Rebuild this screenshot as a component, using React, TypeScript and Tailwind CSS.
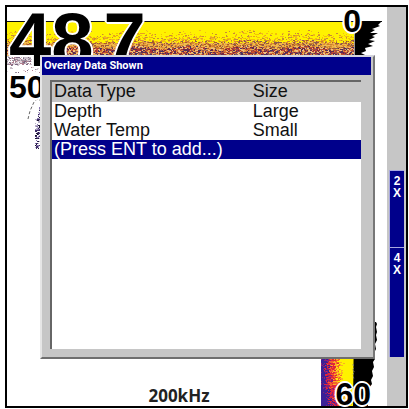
import React from 'react';

const rows = [
  { type: 'Depth', size: 'Large' },
  { type: 'Water Temp', size: 'Small' },
];

const zoomLevels = [
  { label: '2X', className: 'h-[77px]' },
  { label: '4X', className: 'h-[110px]' },
];

// small seeded generator, so the echo looks the same on every render
const createRandom = (seed: number) => () => {
  seed = (seed * 1664525 + 1013904223) % 4294967296;
  return seed / 4294967296;
};

type Pick = (x: number, y: number, random: () => number) => string | null;

// returns one path per colour, made of 1px high cells
const speckle = (x0: number, y0: number, x1: number, y1: number, seed: number, pick: Pick) => {
  const random = createRandom(seed);
  const paths: Record<string, string> = {};
  for (let y = y0; y < y1; y++) {
    let x = x0;
    while (x < x1) {
      const width = Math.min(random() > 0.6 ? 2 : 1, x1 - x);
      const color = pick(x, y, random);
      if (color) paths[color] = (paths[color] || '') + `M${x} ${y}h${width}v1h-${width}z`;
      x += width;
    }
  }
  return Object.entries(paths);
};

const from = (colors: string[], random: () => number) => colors[Math.floor(random() * colors.length)];

const surface = speckle(0, 23, 348, 49, 7, (x, y, random) => {
  const level = (y - 23) / 26 + Math.sin(x / 9) * 0.05;
  if (random() > level * 1.4) return null;
  if (level < 0.4) return from(['#f4c400', '#e8a020', '#f0b820', '#c88a38'], random);
  if (level < 0.65) return from(['#e08a30', '#c8802e', '#a85a2a', '#f0c050', '#8a5a50', '#e0a040'], random);
  return from(['#a83238', '#6a2848', '#4a3060', '#d87838', '#f0c080', '#8a5a58', '#c05030', '#e8a850'], random);
});

const clutter = speckle(0, 49, 34, 66, 21, (x, y, random) => {
  if (random() > (y < 58 ? 0.8 : 0.15)) return null;
  return from(['#9a8f9c', '#c8bec8', '#7b6580', '#e0d4dc', '#b08090', '#d0c4cc'], random);
});

const streak = speckle(18, 94, 36, 142, 33, (x, y, random) => {
  const edge = y < 112 ? 33 - (y - 94) * 0.2 : 28;
  if (x < edge || x > 40 - (y - 94) * 0.12 || random() > 0.6) return null;
  return from(['#3c2b66', '#8a78b0', '#1a1330', '#b8b0c8'], random);
});

const bottomEcho = speckle(0, 0, 33, 84, 5, (x, y, random) => {
  const v = x + (random() - 0.5) * 11 - (y > 58 ? (y - 58) * 0.25 : 0);
  if (v < 3) return '#3a2096';
  if (v < 6) return '#8a1f78';
  if (v < 11) return '#e0263a';
  if (v < 15) return '#f4622c';
  if (v < 19) return '#fbb024';
  return '#fff200';
});

const Cells = ({ paths }: { paths: [string, string][] }) => (
  <g shapeRendering="crispEdges">
    {paths.map(([color, d]) => (
      <path key={color} d={d} fill={color} />
    ))}
  </g>
);

const outline =
  '[text-shadow:2px_0_#fff,-2px_0_#fff,0_2px_#fff,0_-2px_#fff,1px_1px_#fff,-1px_-1px_#fff,1px_-1px_#fff,-1px_1px_#fff]';

const SonarEcho = () => (
  <>
    <svg className="absolute inset-x-0 top-0 h-[150px] w-full" viewBox="0 0 380 150" preserveAspectRatio="none">
      <rect x="0" y="14" width="348" height="35" fill="#fff200" />
      <rect x="0" y="36" width="348" height="13" fill="#f0b44a" />
      <Cells paths={surface} />
      <Cells paths={clutter} />
      <Cells paths={streak} />
      <path d="M21 112l2-8 4-9M28 93l4-1 3 4" fill="none" stroke="#666" strokeDasharray="3 2" />
      <path d="M0 14.500h375" stroke="#111" />
      <path
        d="M348 14h27l-4 4 2 1-8 3 3 1-5 3 8 0-6 3 3 1-6 3 6 1-7 3 5 2-8 2 1 3-5 2 4 2-4 2h-6z"
        fill="#000"
      />
      <path d="M347.500 26v22" stroke="#9a9a9a" />
    </svg>
    <svg className="absolute bottom-0 right-2.5 h-[84px] w-14" viewBox="0 0 56 84">
      <Cells paths={bottomEcho} />
      <path
        d="M33 0h22l1 2-1 3 1 5-1 3 1 5-2 4 1 5-2 4 1 6-2 3 1 5-2 4 1 5-2 4 1 4-3 4-2 6 1 12h-15z"
        fill="#000"
      />
      <path d="M32 42l1 4-2 2 3 2-2 2 1 6" fill="none" stroke="#777" strokeDasharray="2 2" />
    </svg>
  </>
);

const OverlayDialog = () => (
  <section
    role="dialog"
    aria-labelledby="overlay-title"
    className="absolute left-[33px] right-3 top-12 border-2 border-b-[#6e6e6e] border-l-[#e6e6e6] border-r-[#777] border-t-[#d4d4dc] bg-[#c6c6c6]"
  >
    <h1
      id="overlay-title"
      className="mr-0.5 h-[18px] bg-[#00008b] pl-0.5 font-[Roboto,sans-serif] text-[11px] font-bold leading-[18px] text-white"
    >
      Overlay Data Shown
    </h1>
    <div className="mb-2 ml-2 mr-3 mt-[5px] h-[269px] border-l-2 border-t-2 border-[#666] bg-white">
      <table className="w-full table-fixed text-left text-lg leading-[19px] text-[#111]">
        <thead className="bg-[#c6c6c6]">
          <tr>
            <th className="w-[65%] pb-px pl-0.5 font-normal">Data Type</th>
            <th className="pb-px font-normal">Size</th>
          </tr>
        </thead>
        <tbody>
          {rows.map((row) => (
            <tr key={row.type}>
              <td className="pl-0.5">{row.type}</td>
              <td>{row.size}</td>
            </tr>
          ))}
          <tr className="bg-[#00008b] text-white">
            <td colSpan={2}>
              <button type="button" className="block w-full pl-0.5 text-left">
                (Press ENT to add...)
              </button>
            </td>
          </tr>
        </tbody>
      </table>
    </div>
  </section>
);

const ZoomBar = () => (
  <aside className="flex w-[19px] flex-col bg-[#c6c6c6] px-0.5 pt-[163px]">
    {zoomLevels.map((level) => (
      <div
        key={level.label}
        className={`flex flex-col items-center border-l border-t border-[#a8a8e0] bg-[#00008b] pt-1 text-xs font-bold leading-3 text-white ${level.className}`}
      >
        {level.label.split('').map((char) => (
          <span key={char}>{char}</span>
        ))}
      </div>
    ))}
  </aside>
);

const App = () => {
  return (
    <div className="flex min-h-screen bg-white pb-px pl-[5px] pr-px pt-[5px] font-['Liberation_Sans',Arial,sans-serif]">
      <div className="flex flex-1 border-2 border-black">
        <main className="relative flex-1">
          <SonarEcho />
          <div className={`absolute left-0.5 top-0 flex gap-2.5 text-[76px] font-bold leading-[66px] text-black ${outline}`}>
            <span>48</span>
            <span>7</span>
          </div>
          <span className={`absolute left-0.5 top-16 text-[32px] font-bold leading-8 ${outline}`}>50</span>
          <span className={`absolute right-[26px] top-0 text-[32px] font-bold leading-7 ${outline}`}>0</span>
          <span className={`absolute bottom-0 right-4 text-[32px] font-bold leading-6 ${outline}`}>60</span>
          <OverlayDialog />
          <span className="absolute inset-x-0 bottom-0 pr-9 text-center font-['Noto_Sans',sans-serif] text-[17px] font-bold leading-5 text-[#222]">
            200kHz
          </span>
        </main>
        <ZoomBar />
      </div>
    </div>
  );
};

export default App;
